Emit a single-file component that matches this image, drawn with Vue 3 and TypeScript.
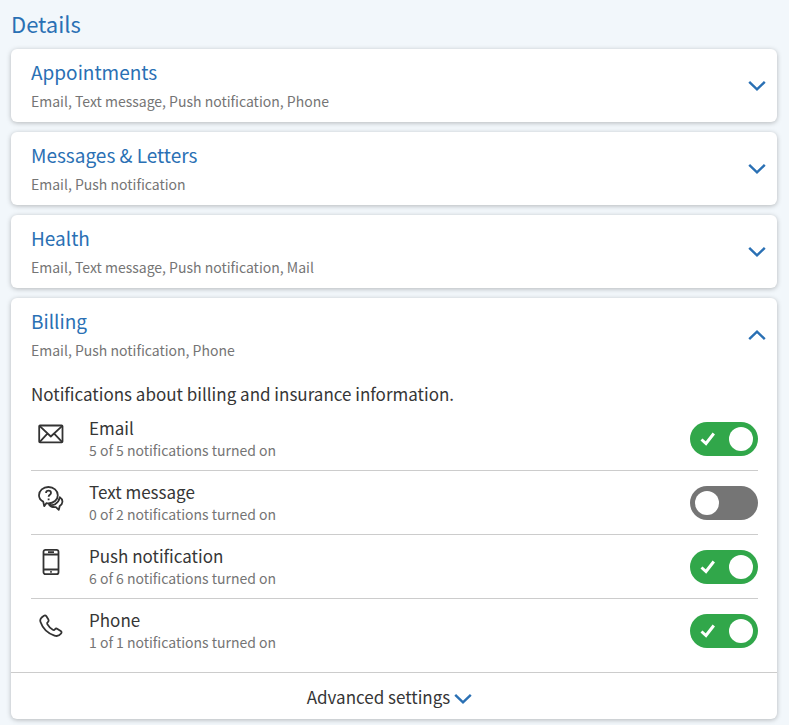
<script setup lang="ts">
import { reactive, ref } from 'vue'

type IconName = 'email' | 'text' | 'push' | 'phone'

interface Channel {
  id: IconName
  name: string
  total: number
  on: boolean
}

interface Category {
  id: string
  title: string
  summary: string
  description?: string
  open: boolean
  channels: Channel[]
}

const categories = reactive<Category[]>([
  { id: 'appointments', title: 'Appointments', summary: 'Email, Text message, Push notification, Phone', open: false, channels: [] },
  { id: 'messages', title: 'Messages & Letters', summary: 'Email, Push notification', open: false, channels: [] },
  { id: 'health', title: 'Health', summary: 'Email, Text message, Push notification, Mail', open: false, channels: [] },
  {
    id: 'billing',
    title: 'Billing',
    summary: 'Email, Push notification, Phone',
    description: 'Notifications about billing and insurance information.',
    open: true,
    channels: [
      { id: 'email', name: 'Email', total: 5, on: true },
      { id: 'text', name: 'Text message', total: 2, on: false },
      { id: 'push', name: 'Push notification', total: 6, on: true },
      { id: 'phone', name: 'Phone', total: 1, on: true },
    ],
  },
])

const advanced = ref(false)

function status(c: Channel): string {
  return `${c.on ? c.total : 0} of ${c.total} notifications turned on`
}
</script>

<template>
  <main class="page">
    <h1 class="page-title">Details</h1>

    <section v-for="cat in categories" :key="cat.id" class="card">
      <h2 class="card-heading">
        <button type="button" class="card-toggle" :aria-expanded="cat.open" @click="cat.open = !cat.open">
          <span class="card-text">
            <span class="card-title">{{ cat.title }}</span>
            <span class="card-summary">{{ cat.summary }}</span>
          </span>
          <svg class="chevron" :class="{ up: cat.open }" viewBox="0 0 18 12" aria-hidden="true">
            <path d="M1.2 1.8 9 9.4l7.8-7.6" />
          </svg>
        </button>
      </h2>

      <template v-if="cat.open && cat.channels.length">
        <div class="card-body">
          <p class="description">{{ cat.description }}</p>
          <ul class="channels">
            <li v-for="c in cat.channels" :key="c.id" class="channel">
              <svg class="icon" viewBox="0 0 26 28" aria-hidden="true">
                <g v-if="c.id === 'email'">
                  <rect x="1.2" y="5.5" width="23.3" height="16.8" rx="0.8" />
                  <path d="M1.800 6.200 12.800 16.500 24 6.200M1.800 21.800l7.600-8.200M24 21.800l-7.800-8.200" />
                </g>
                <g v-else-if="c.id === 'text'">
                  <path d="M5.200 17.600C2.600 16.200 1 13.900 1 11.200 1 6.600 5.200 3 10.400 3s9.400 3.600 9.400 8.200-4.200 8.200-9.400 8.200c-.7 0-1.400-.1-2.100-.2-.6.800-1.300 1.800-2.100 2.900-.3-1.400-.6-2.900-1-4.500Z" />
                  <path d="M21.800 13.200c1.900 1.200 2.800 2.900 2.600 4.800-.1 1.700-1.100 3.100-2.700 4l-.9 3.900-2.900-2.800c-3.200.3-5.500-.7-6.800-2.500 2.100.9 4.300.6 6.300-.5 2.300-1.500 3.900-3.900 4.400-6.900Z" />
                  <path d="M8 9c.1-1.500 1.100-2.300 2.500-2.300 1.500 0 2.500.9 2.500 2.200 0 1.800-2.400 1.800-2.400 3.800M10.600 14.600v1.700" />
                </g>
                <g v-else-if="c.id === 'push'">
                  <rect x="5.500" y="1.800" width="15" height="24.400" rx="2" />
                  <path d="M5.500 6.500h15M5.500 21.500h15M10 4.200h6M12.200 23.900h1.600" />
                </g>
                <g v-else>
                  <path d="M5.600 3.900c1.200-.8 2.100-.6 2.800.4l2 3.200c.6 1 .3 1.800-.5 2.500-.8.600-1.100 1.200-.6 2.100 1.400 2.400 3.200 4.300 5.500 5.700 1 .6 1.600.3 2.200-.5.600-.8 1.500-1 2.500-.4l3.200 2.100c1 .7 1.100 1.600.4 2.500-1.700 2.200-3.900 3.100-6.600 2.100C9.900 21.300 4.500 15.800 2.400 9.700c-.8-2.400.9-4.300 3.200-5.800Z" />
                </g>
              </svg>
              <div class="channel-text">
                <label :for="`${cat.id}-${c.id}`" class="channel-name">{{ c.name }}</label>
                <span class="channel-status">{{ status(c) }}</span>
              </div>
              <span class="switch">
                <input :id="`${cat.id}-${c.id}`" v-model="c.on" type="checkbox" role="switch" class="switch-input" />
                <svg v-if="c.on" class="check" viewBox="0 0 16 14" aria-hidden="true">
                  <path d="M1.500 7.500 6 11.500 13.800 1.500" />
                </svg>
              </span>
            </li>
          </ul>
        </div>
        <button type="button" class="advanced" :aria-expanded="advanced" @click="advanced = !advanced">
          Advanced settings
          <svg class="chevron" :class="{ up: advanced }" viewBox="0 0 18 12" aria-hidden="true">
            <path d="M1.2 1.8 9 9.4l7.8-7.6" />
          </svg>
        </button>
      </template>
    </section>
  </main>
</template>

<style>
body {
  background: #f2f7fb;
}
</style>

<style scoped>
.page {
  display: flex;
  flex-direction: column;
  gap: 10px;
  padding: 8px 12px 6px 11px;
  font-family: "Noto Sans CJK SC", "Noto Sans", sans-serif;
  color: #363636;
}

.page-title {
  margin: 0;
  font-size: 22px;
  font-weight: 400;
  line-height: 31px;
  color: #2a70b4;
}

.card {
  overflow: hidden;
  border-radius: 6px;
  background: #fff;
  box-shadow: 0 1px 5px rgba(0, 0, 0, 0.26);
}

.card-heading {
  margin: 0;
  font-weight: 400;
}

button {
  border: 0;
  background: none;
  font: inherit;
  color: inherit;
  cursor: pointer;
}

.card-toggle {
  display: flex;
  align-items: center;
  justify-content: space-between;
  width: 100%;
  padding: 8px 11px 7px 20px;
  text-align: left;
}

.card-text {
  display: flex;
  flex-direction: column;
}

.card-title {
  font-size: 19px;
  line-height: 30px;
  color: #2a70b4;
}

.card-summary {
  font-size: 14px;
  line-height: 28px;
  color: #757575;
}

.chevron {
  flex: none;
  width: 18px;
  height: 12px;
  fill: none;
  stroke: #2a70b4;
  stroke-width: 2.4;
}

.chevron.up {
  transform: rotate(180deg);
}

.card-body {
  padding: 9px 19px 10px 20px;
}

.description {
  margin: 0;
  font-size: 17px;
  line-height: 27px;
}

.channels {
  margin: 0;
  padding: 0;
  list-style: none;
}

.channel {
  display: flex;
  align-items: center;
  padding: 7px 0 6px;
  border-bottom: 1px solid #ccc;
}

.channel:last-child {
  border-bottom: 0;
}

.icon {
  flex: none;
  align-self: flex-start;
  width: 26px;
  height: 28px;
  margin: 6px 25px 0 7px;
  fill: none;
  stroke: #333;
  stroke-width: 1.8;
  stroke-linejoin: round;
}

.channel-text {
  display: flex;
  flex: 1;
  flex-direction: column;
  min-width: 0;
}

.channel-name {
  font-size: 17px;
  line-height: 28px;
}

.channel-status {
  padding-bottom: 6px;
  font-size: 14px;
  line-height: 16px;
  color: #757575;
}

.switch {
  position: relative;
  flex: none;
  width: 68px;
  height: 34px;
}

.switch-input {
  appearance: none;
  display: flex;
  align-items: center;
  box-sizing: border-box;
  width: 100%;
  height: 100%;
  margin: 0;
  padding: 0 5px;
  border-radius: 17px;
  background: #757575;
  cursor: pointer;
}

.switch-input::before {
  content: "";
  width: 24px;
  height: 24px;
  border-radius: 50%;
  background: #fff;
}

.switch-input:checked {
  justify-content: flex-end;
  background: #31a74a;
}

.check {
  position: absolute;
  top: 10px;
  left: 10px;
  width: 16px;
  height: 14px;
  fill: none;
  stroke: #fff;
  stroke-width: 3;
  pointer-events: none;
}

.advanced {
  display: flex;
  align-items: center;
  justify-content: center;
  gap: 4px;
  width: 100%;
  padding: 10px 20px 8px 11px;
  border-top: 1px solid #ccc;
  font-size: 17px;
  line-height: 28px;
}

.advanced .chevron {
  margin-top: 4px;
}
</style>
